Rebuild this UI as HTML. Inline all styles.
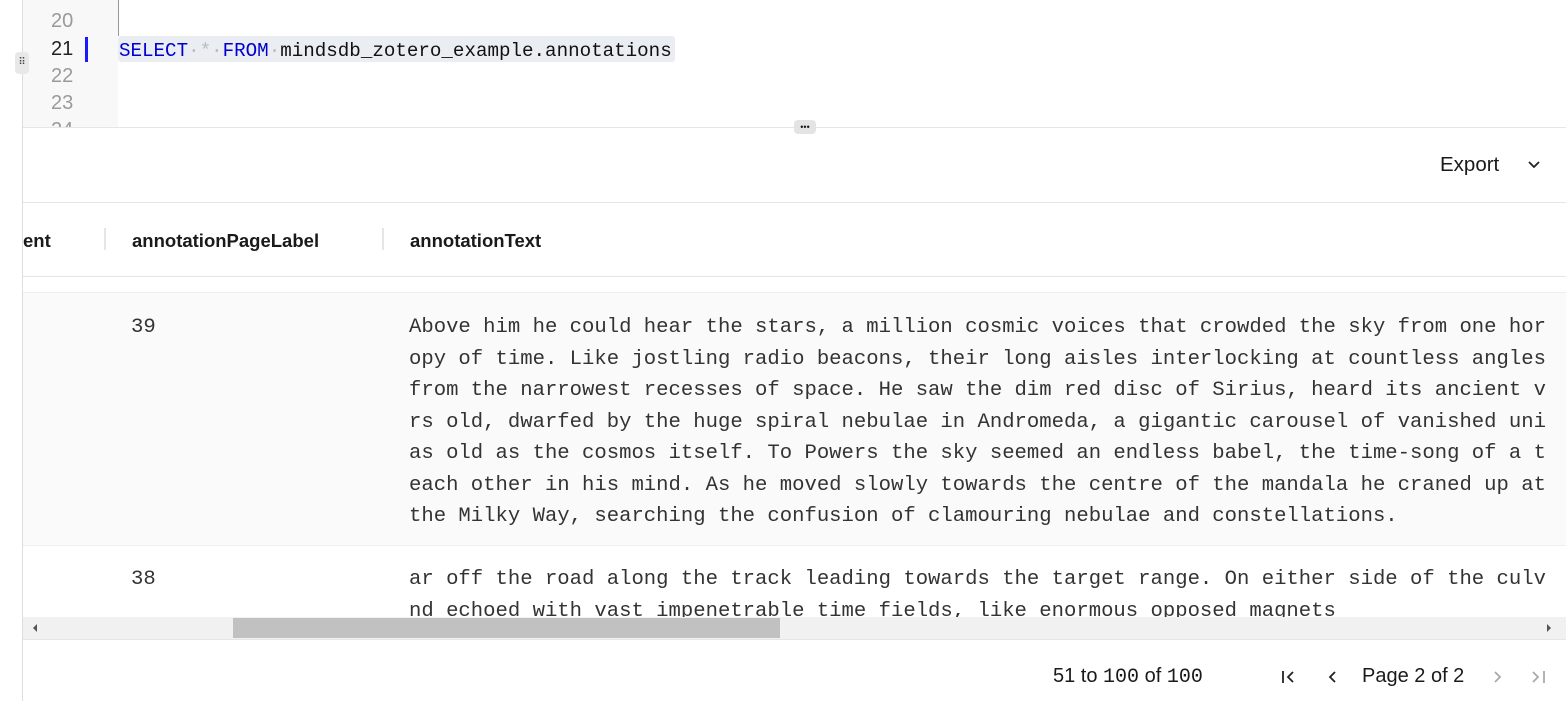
<!DOCTYPE html>
<html><head><meta charset="utf-8"><style>
*{margin:0;padding:0;box-sizing:border-box}
body{width:1566px;height:701px;overflow:hidden;background:#fff;position:relative;font-family:"Liberation Sans",sans-serif;color:#1a1a1a}
.a{position:absolute;white-space:pre}
.ln{font-family:"Liberation Sans",sans-serif;font-size:20px;color:#9a9a9a;left:51px}
.mono{font-family:"Liberation Mono",monospace}
.row{font-size:20.6px;line-height:31.5px;color:#333}
</style></head><body>
<div class="a" style="left:22px;top:0;width:1px;height:701px;background:#ddd"></div>
<div class="a" style="left:23px;top:0;width:95px;height:127px;background:#f8f8f8"></div>
<div class="a" style="left:118px;top:0;width:1px;height:36px;background:#999"></div>
<div class="a ln" style="top:10px">20</div>
<div class="a ln" style="top:38px;color:#222">21</div>
<div class="a" style="left:85px;top:37px;width:3px;height:25px;background:#1a1aff"></div>
<div class="a ln" style="top:65px">22</div>
<div class="a ln" style="top:92px">23</div>
<div class="a ln" style="top:119px;height:8px;overflow:hidden">24</div>
<div class="a" style="left:15px;top:52px;width:14px;height:22px;background:#e8e8e8;border-radius:4px;font-size:10px;text-align:center;line-height:22px;color:#444">⠿</div>
<div class="a" style="left:118px;top:36px;width:557px;height:26px;background:#eaedf2;border-radius:3px"></div>
<div class="a mono" style="left:119px;top:39px;font-size:19.2px;line-height:24px;color:#111"><span style="color:#0000d0">SELECT</span><span style="color:#bbb">·*·</span><span style="color:#0000d0">FROM</span><span style="color:#bbb">·</span>mindsdb_zotero_example.annotations</div>
<div class="a" style="left:23px;top:127px;width:1543px;height:1px;background:#e6e6e6"></div>
<div class="a" style="left:794px;top:120px;width:22px;height:14px;background:#e4e4e4;border-radius:4px;font-size:9px;text-align:center;line-height:14px">•••</div>
<div class="a" style="left:1440px;top:153px;font-size:20.5px">Export</div>
<svg class="a" style="left:1526px;top:157px" width="16" height="16"><path d="M3 5l5 5 5-5" stroke="#222" stroke-width="1.8" fill="none"/></svg>
<div class="a" style="left:23px;top:202px;width:1543px;height:1px;background:#e6e6e6"></div>
<div class="a" style="left:23px;top:276px;width:1543px;height:1px;background:#e6e6e6"></div>
<div class="a" style="left:23px;top:292px;width:1543px;height:1px;background:#eee"></div>
<div class="a" style="left:23px;top:293px;width:1543px;height:252px;background:#fafafa"></div>
<div class="a" style="left:23px;top:545px;width:1543px;height:1px;background:#eee"></div>
<div class="a" style="left:104px;top:228px;width:2px;height:22px;background:#e6e6e6"></div>
<div class="a" style="left:382px;top:228px;width:2px;height:22px;background:#e6e6e6"></div>
<div class="a" style="left:23px;top:230px;font-size:18.5px;font-weight:bold">ent</div>
<div class="a" style="left:132px;top:230px;font-size:18.5px;font-weight:bold">annotationPageLabel</div>
<div class="a" style="left:410px;top:230px;font-size:18.5px;font-weight:bold">annotationText</div>
<div class="a mono row" style="left:131px;top:312px">39</div>
<div class="a mono row" style="left:409px;top:312px">Above him he could hear the stars, a million cosmic voices that crowded the sky from one hor
opy of time. Like jostling radio beacons, their long aisles interlocking at countless angles
from the narrowest recesses of space. He saw the dim red disc of Sirius, heard its ancient v
rs old, dwarfed by the huge spiral nebulae in Andromeda, a gigantic carousel of vanished uni
as old as the cosmos itself. To Powers the sky seemed an endless babel, the time-song of a t
each other in his mind. As he moved slowly towards the centre of the mandala he craned up at
the Milky Way, searching the confusion of clamouring nebulae and constellations.</div>
<div class="a" style="left:23px;top:546px;width:1543px;height:71px;overflow:hidden">
<div class="a mono row" style="left:108px;top:18px">38</div>
<div class="a mono row" style="left:386px;top:18px">ar off the road along the track leading towards the target range. On either side of the culv
nd echoed with vast impenetrable time fields, like enormous opposed magnets</div>
</div>
<div class="a" style="left:23px;top:617px;width:1543px;height:22px;background:#f1f1f1"></div>
<div class="a" style="left:233px;top:618px;width:547px;height:20px;background:#c1c1c1"></div>
<svg class="a" style="left:30px;top:622px" width="10" height="12"><path d="M7 2L3 6l4 4z" fill="#555"/></svg>
<svg class="a" style="left:1544px;top:622px" width="10" height="12"><path d="M3 2l4 4-4 4z" fill="#555"/></svg>
<div class="a" style="left:23px;top:639px;width:1543px;height:1px;background:#e6e6e6"></div>
<div class="a" style="left:1053px;top:665px;font-size:20px">51 to <span class="mono" style="font-size:20px">100</span> of <span class="mono" style="font-size:20px">100</span></div>
<svg class="a" style="left:1280px;top:668px" width="18" height="18"><path d="M3 3v12M13 4l-5 5 5 5" stroke="#222" stroke-width="1.8" fill="none"/></svg>
<svg class="a" style="left:1323px;top:668px" width="18" height="18"><path d="M12 4l-5 5 5 5" stroke="#222" stroke-width="1.8" fill="none"/></svg>
<div class="a" style="left:1362px;top:665px;font-size:20px">Page 2 of 2</div>
<svg class="a" style="left:1489px;top:668px" width="18" height="18"><path d="M6 4l5 5-5 5" stroke="#aaa" stroke-width="1.8" fill="none"/></svg>
<svg class="a" style="left:1530px;top:668px" width="18" height="18"><path d="M3 4l5 5-5 5M14 3v12" stroke="#aaa" stroke-width="1.8" fill="none"/></svg>
</body></html>
